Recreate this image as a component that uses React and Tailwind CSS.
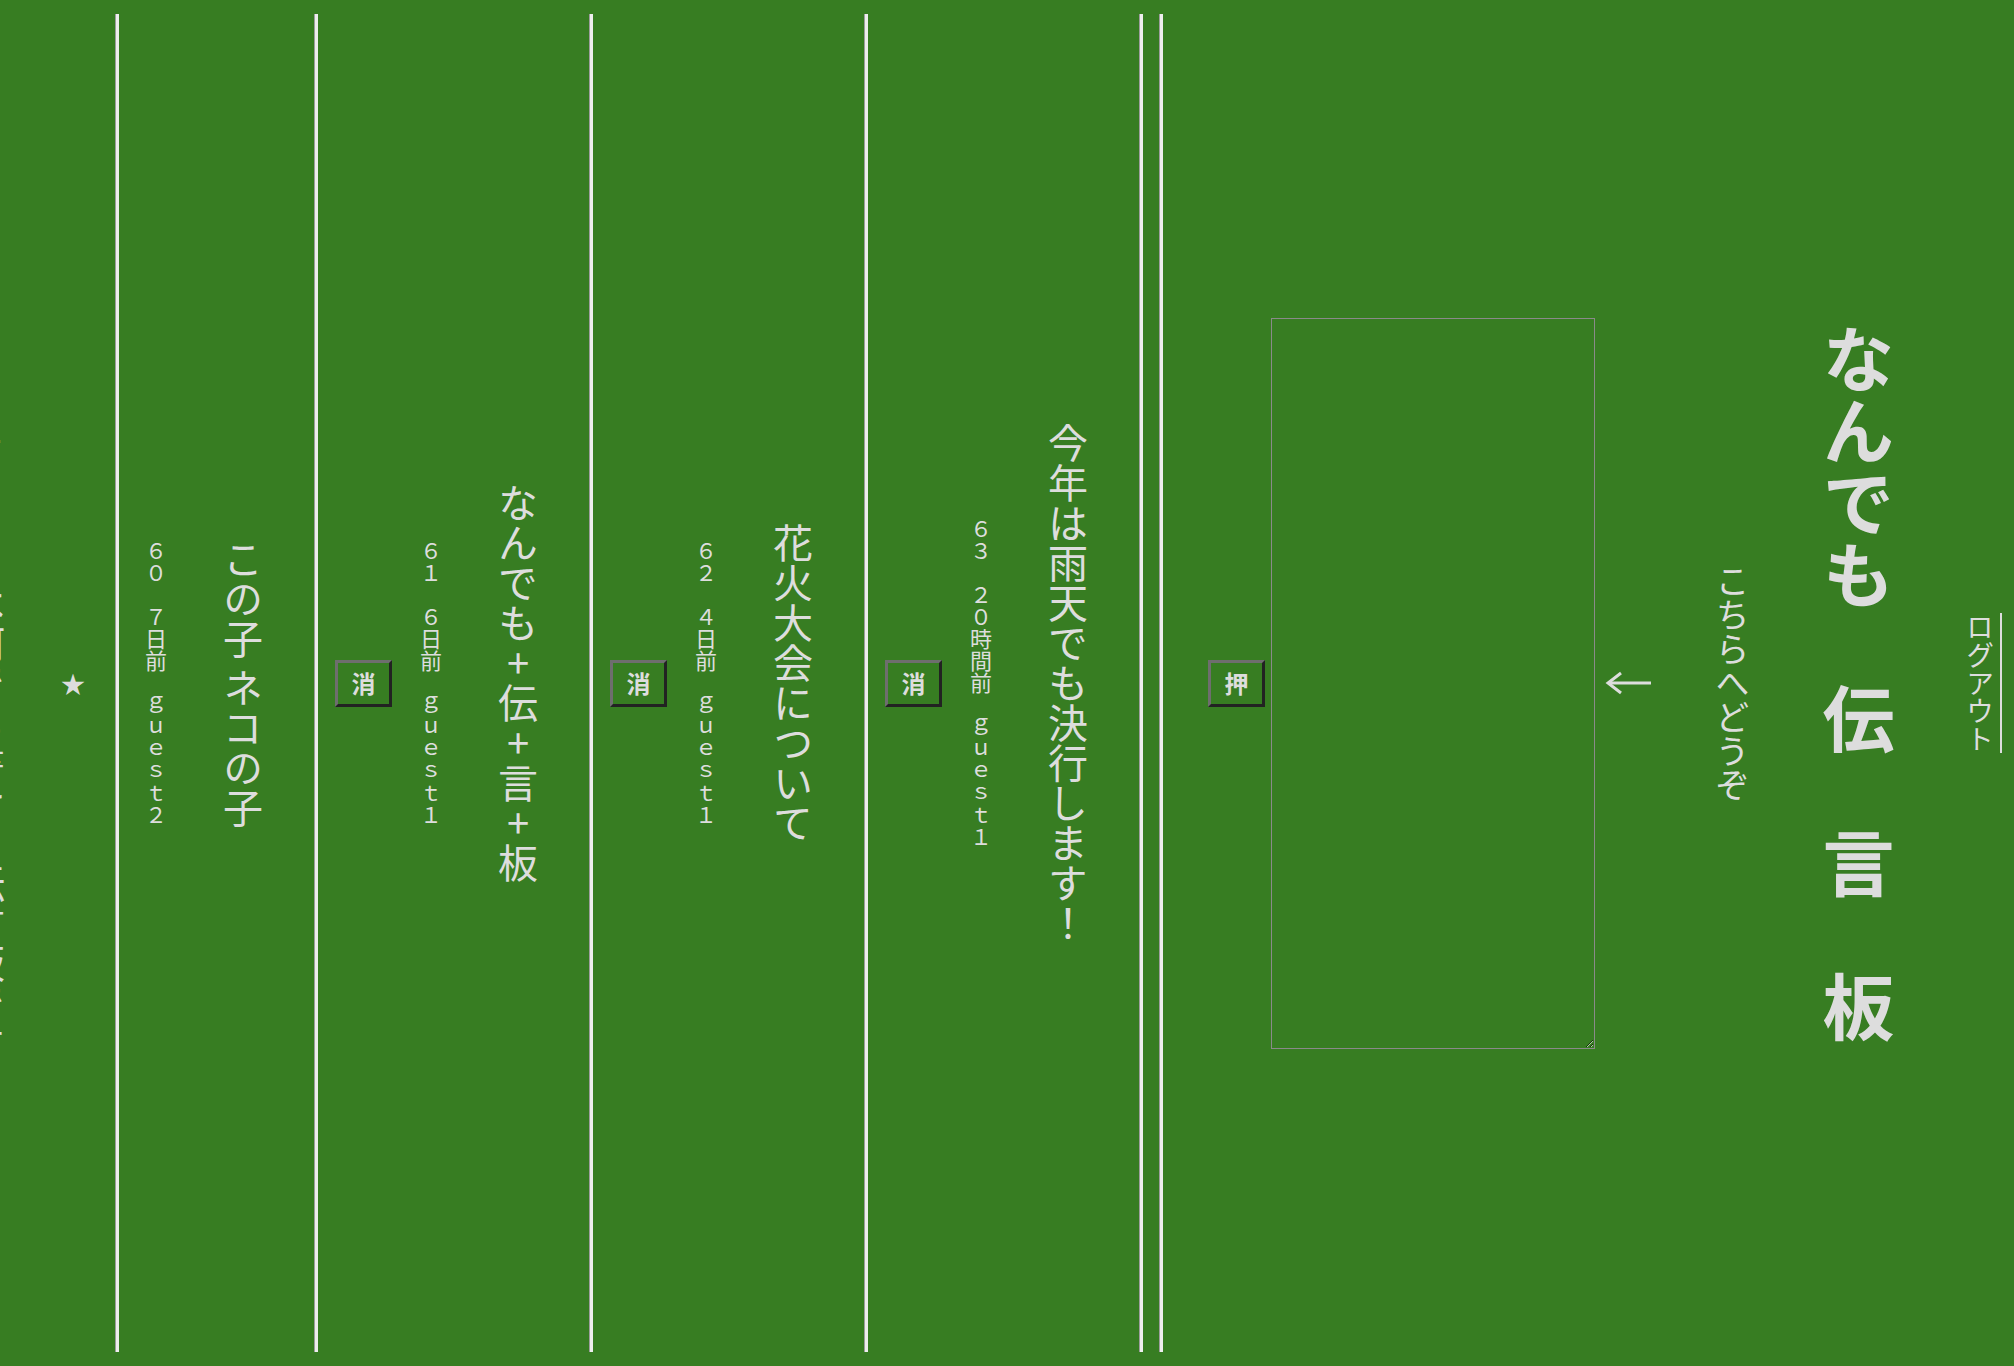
import React from "react";

const posts = [
  { no: "６３", ago: "２０時間前", user: "ｇｕｅｓｔ１", title: "今年は雨天でも決行します！", del: true },
  { no: "６２", ago: "４日前", user: "ｇｕｅｓｔ１", title: "花火大会について", del: true },
  { no: "６１", ago: "６日前", user: "ｇｕｅｓｔ１", title: "なんでも+伝+言+板", del: true, upright: true },
  { no: "６０", ago: "７日前", user: "ｇｕｅｓｔ２", title: "この子 ネコの子", del: false },
];

const Rule = ({ className = "" }) => (
  <div className={"h-[1338px] w-[4px] shrink-0 border-l border-[#9e9e9e] bg-[#eeeeee] " + className} />
);

const Btn = ({ label, className = "" }) => (
  <button
    type="button"
    className={
      "flex h-[47px] w-[57px] shrink-0 items-center justify-center border-[3px] border-t-[#6e6e6e] border-l-[#6e6e6e] border-r-[#222222] border-b-[#222222] bg-transparent text-[24px] font-bold leading-none text-[#dddddd] " +
      className
    }
  >
    {label}
  </button>
);

const Post = ({ post }) => (
  <div className={"flex shrink-0 flex-row-reverse items-center pr-[51px] " + (post.del ? "pl-[17px]" : "pl-[26px]")}>
    <p
      className={
        "w-[40px] shrink-0 text-[40px] leading-none [writing-mode:vertical-rl] " +
        (post.upright ? "[text-orientation:upright]" : "")
      }
    >
      {post.title}
    </p>
    <p className="mr-[56px] w-[22px] shrink-0 text-[22px] leading-none [writing-mode:vertical-rl]">
      {post.no}　{post.ago}　{post.user}
    </p>
    {post.del && <Btn label="消" className="mr-[28px]" />}
  </div>
);

export default function App() {
  return (
    <div className="flex h-[1366px] w-[2014px] flex-row-reverse items-center overflow-hidden bg-[#377d22] pr-[12px] font-['Noto_Sans_CJK_JP',sans-serif] text-[#dddddd]">
      <a className="shrink-0 border-r-2 border-[#dddddd] pr-[6px] text-[28px] leading-none [writing-mode:vertical-rl]">
        ログアウト
      </a>
      <h1 className="mr-[72px] w-[72px] shrink-0 text-[72px] font-bold leading-none [writing-mode:vertical-rl]">
        なんでも　伝　言　板
      </h1>
      <p className="mr-[73px] w-[34px] shrink-0 text-[34px] leading-none [writing-mode:vertical-rl]">
        こちらへどうぞ
      </p>
      <svg className="mr-[64px] shrink-0" width="46" height="24" viewBox="0 0 46 24" fill="none" stroke="#dddddd" strokeWidth="3">
        <path d="M3 12H46" />
        <path d="M16 2L3 12L16 22" />
      </svg>
      <textarea className="mr-[10px] h-[731px] w-[324px] shrink-0 border border-[#8a8a8a] bg-transparent text-[#dddddd]" />
      <Btn label="押" className="mr-[6px]" />
      <Rule className="mr-[45px]" />
      <Rule className="mr-[16px]" />
      {posts.map((p) => (
        <React.Fragment key={p.no}>
          <Post post={p} />
          <Rule />
        </React.Fragment>
      ))}
      <span className="mr-[30px] shrink-0 text-[24px] leading-none">★</span>
      <p className="mr-[56px] w-[40px] shrink-0 text-[40px] leading-none [writing-mode:vertical-rl]">
        ようこそ！ここは何でも書ける伝言板です
      </p>
    </div>
  );
}
